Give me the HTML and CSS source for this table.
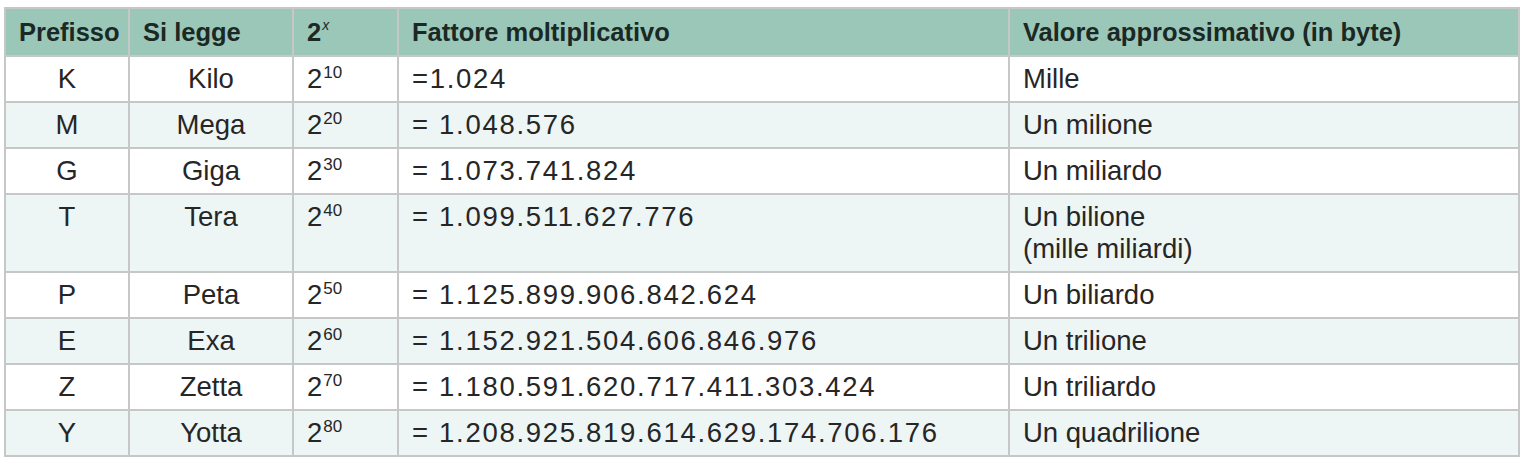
FILE: index.html
```html
<!DOCTYPE html>
<html lang="it">
<head>
<meta charset="utf-8">
<title>Prefissi</title>
<link rel="stylesheet" href="styles.css">
</head>
<body>
<table class="tbl">
  <colgroup>
    <col class="c1"><col class="c2"><col class="c3"><col class="c4"><col class="c5">
  </colgroup>
  <thead>
    <tr>
      <th>Prefisso</th>
      <th>Si legge</th>
      <th>2<sup class="hx">x</sup></th>
      <th>Fattore moltiplicativo</th>
      <th>Valore approssimativo (in byte)</th>
    </tr>
  </thead>
  <tbody>
    <tr><td class="ctr">K</td><td class="ctr">Kilo</td><td>2<sup>10</sup></td><td class="num">=1.024</td><td>Mille</td></tr>
    <tr class="alt"><td class="ctr">M</td><td class="ctr">Mega</td><td>2<sup>20</sup></td><td class="num">= 1.048.576</td><td>Un milione</td></tr>
    <tr><td class="ctr">G</td><td class="ctr">Giga</td><td>2<sup>30</sup></td><td class="num">= 1.073.741.824</td><td>Un miliardo</td></tr>
    <tr class="alt tall"><td class="ctr">T</td><td class="ctr">Tera</td><td>2<sup>40</sup></td><td class="num">= 1.099.511.627.776</td><td>Un bilione<br>(mille miliardi)</td></tr>
    <tr><td class="ctr">P</td><td class="ctr">Peta</td><td>2<sup>50</sup></td><td class="num">= 1.125.899.906.842.624</td><td>Un biliardo</td></tr>
    <tr class="alt"><td class="ctr">E</td><td class="ctr">Exa</td><td>2<sup>60</sup></td><td class="num">= 1.152.921.504.606.846.976</td><td>Un trilione</td></tr>
    <tr><td class="ctr">Z</td><td class="ctr">Zetta</td><td>2<sup>70</sup></td><td class="num">= 1.180.591.620.717.411.303.424</td><td>Un triliardo</td></tr>
    <tr class="alt"><td class="ctr">Y</td><td class="ctr">Yotta</td><td>2<sup>80</sup></td><td class="num">= 1.208.925.819.614.629.174.706.176</td><td>Un quadrilione</td></tr>
  </tbody>
</table>
</body>
</html>
```

FILE: styles.css
```css
html, body {
  margin: 0;
  padding: 0;
  background: #ffffff;
}
body {
  padding: 7px 0 0 4px;
  font-family: "Liberation Sans", Arial, sans-serif;
  color: #262626;
}
.tbl {
  border-collapse: collapse;
  table-layout: fixed;
  width: 1514px;
  font-size: 27.5px;
}
.c1 { width: 124px; }
.c2 { width: 164px; }
.c3 { width: 105px; }
.c4 { width: 611px; }
.c5 { width: 510px; }

.tbl th, .tbl td {
  border: 2px solid #c6c8c7;
  padding: 0 13px;
  text-align: left;
  vertical-align: top;
  line-height: 32px;
}
.tbl th {
  background: #9bc7b9;
  color: #1b2925;
  font-weight: bold;
  font-size: 25.5px;
  height: 46px;
  padding-top: 7px;
  padding-bottom: 7px;
  box-sizing: border-box;
  vertical-align: middle;
}
.tbl td {
  height: 44px;
  box-sizing: border-box;
  padding-top: 6px;
  padding-bottom: 6px;
}
.tbl tr.tall td {
  height: 78px;
}
.tbl tr.alt td {
  background: #edf5f5;
}
.tbl td.ctr {
  text-align: center;
}
.tbl td.num {
  letter-spacing: 1.7px;
}
sup {
  font-size: 17px;
  line-height: 0;
  vertical-align: 10px;
  margin-left: 1px;
}
sup.hx {
  font-size: 14px;
  font-weight: normal;
  font-style: italic;
  vertical-align: 11px;
}
```
